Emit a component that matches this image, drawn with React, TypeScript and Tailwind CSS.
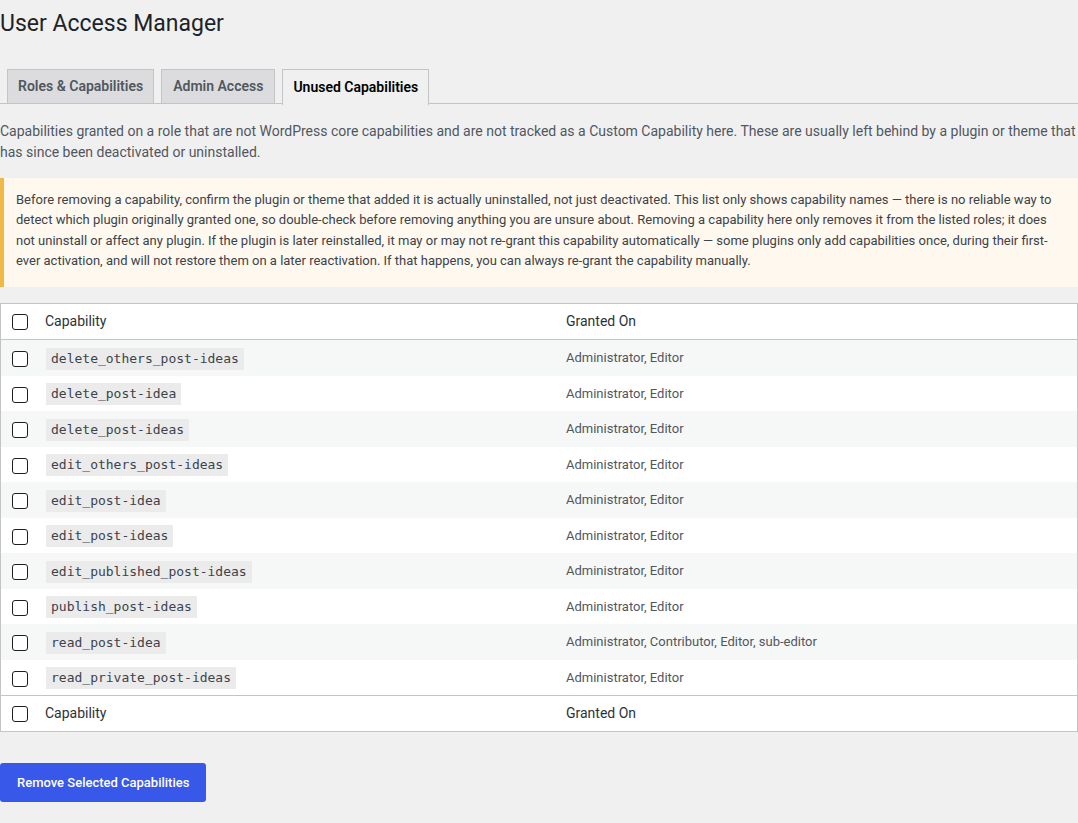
import React from 'react';

const rows: { cap: string; roles: string }[] = [
  { cap: 'delete_others_post-ideas', roles: 'Administrator, Editor' },
  { cap: 'delete_post-idea', roles: 'Administrator, Editor' },
  { cap: 'delete_post-ideas', roles: 'Administrator, Editor' },
  { cap: 'edit_others_post-ideas', roles: 'Administrator, Editor' },
  { cap: 'edit_post-idea', roles: 'Administrator, Editor' },
  { cap: 'edit_post-ideas', roles: 'Administrator, Editor' },
  { cap: 'edit_published_post-ideas', roles: 'Administrator, Editor' },
  { cap: 'publish_post-ideas', roles: 'Administrator, Editor' },
  { cap: 'read_post-idea', roles: 'Administrator, Contributor, Editor, sub-editor' },
  { cap: 'read_private_post-ideas', roles: 'Administrator, Editor' },
];

function Checkbox() {
  return <span className="block w-4 h-4 border border-[#1e1e1e] rounded-[3px] bg-white" />;
}

function HeadRow({ top }: { top?: boolean }) {
  return (
    <div
      className={
        'grid grid-cols-[36px_520px_1fr] items-center h-[36px] text-[14px] text-[#2c3338] bg-white ' +
        (top ? 'border-b border-[#c3c4c7]' : 'border-t border-[#c3c4c7]')
      }
    >
      <div className="pl-[11px]">
        <Checkbox />
      </div>
      <div className="pl-[8px]">Capability</div>
      <div className="pl-[9px]">Granted On</div>
    </div>
  );
}

export default function App() {
  return (
    <div
      className="min-h-[823px] bg-[#f0f0f1] text-[#3c434a]"
      style={{ fontFamily: 'Roboto, "Liberation Sans", sans-serif' }}
    >
      <h1 className="pt-[9px] text-[23px] leading-[30px] font-normal text-[#1d2327]">User Access Manager</h1>

      <nav className="mt-[30px] flex border-b border-[#c3c4c7] h-[35px] pl-[7px] gap-[7px]">
        <span className="h-[35px] px-[10px] flex items-center border border-[#c3c4c7] bg-[#dcdcde] text-[14px] font-semibold text-[#50575e]">
          Roles &amp; Capabilities
        </span>
        <span className="h-[35px] px-[11px] flex items-center border border-[#c3c4c7] bg-[#dcdcde] text-[14px] font-semibold text-[#50575e]">
          Admin Access
        </span>
        <span className="h-[36px] px-[10px] pb-[1px] flex items-center border border-b-0 border-[#c3c4c7] bg-[#f0f0f1] text-[14px] font-semibold text-black">
          Unused Capabilities
        </span>
      </nav>

      <p className="mt-[17px] text-[14px] leading-[21px] text-[#50575e]">
        Capabilities granted on a role that are not WordPress core capabilities and are not tracked as a Custom Capability here. These are usually left behind by a plugin or theme that has since been deactivated or uninstalled.
      </p>

      <div className="mt-[15px] border-l-4 border-[#f0b849] bg-[#fef8ee] pl-3 pr-3 pt-[12px] pb-[16px] text-[13px] leading-[20.3px] text-[#3c434a]">
        Before removing a capability, confirm the plugin or theme that added it is actually uninstalled, not just deactivated. This list only shows capability names — there is no reliable way to detect which plugin originally granted one, so double-check before removing anything you are unsure about. Removing a capability here only removes it from the listed roles; it does not uninstall or affect any plugin. If the plugin is later reinstalled, it may or may not re-grant this capability automatically — some plugins only add capabilities once, during their first-ever activation, and will not restore them on a later reactivation. If that happens, you can always re-grant the capability manually.
      </div>

      <div className="mt-4 border border-[#c3c4c7] bg-white">
        <HeadRow top />
        {rows.map((r, i) => (
          <div
            key={r.cap}
            className={
              'grid grid-cols-[36px_520px_1fr] items-center h-[35.5px] ' +
              (i % 2 === 0 ? 'bg-[#f6f7f7]' : 'bg-white')
            }
          >
            <div className="pl-[11px] pt-[3px]">
              <Checkbox />
            </div>
            <div className="pl-[9px]">
              <code
                className="inline-block px-[5px] h-[22px] leading-[22px] bg-[#ebebeb] text-[13px] text-[#3c434a]"
                style={{ fontFamily: '"DejaVu Sans Mono", "Liberation Mono", monospace' }}
              >
                {r.cap}
              </code>
            </div>
            <div className="pl-[9px] text-[13px] text-[#50575e]">{r.roles}</div>
          </div>
        ))}
        <HeadRow />
      </div>

      <div className="pt-[31px]">
        <button className="h-[39px] px-[17px] rounded-[3px] bg-[#3858e9] text-white text-[13px] font-medium">
          Remove Selected Capabilities
        </button>
      </div>
    </div>
  );
}
